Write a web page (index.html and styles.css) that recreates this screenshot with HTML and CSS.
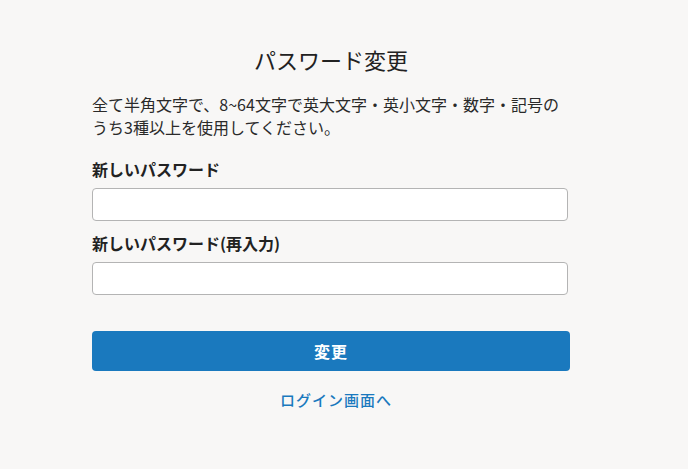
FILE: index.html
```html
<!DOCTYPE html>
<html lang="ja">
<head>
    <meta charset="UTF-8">
    <meta name="viewport" content="width=device-width, initial-scale=1.0">
    <title>パスワード変更</title>
    <link rel="stylesheet" href="styles.css">
</head>
<body>
    <div class="container">
        <h1 class="title">パスワード変更</h1>
        <p class="note">全て半角文字で、8~64文字で英大文字・英小文字・数字・記号のうち3種以上を使用してください。</p>
        <form class="form">
            <label class="label" for="pw1">新しいパスワード</label>
            <input class="input" id="pw1" type="password">
            <label class="label" for="pw2">新しいパスワード(再入力)</label>
            <input class="input" id="pw2" type="password">
            <button class="submit" type="button">変更</button>
        </form>
        <a class="back" href="#">ログイン画面へ</a>
    </div>
</body>
</html>
```

FILE: styles.css
```css
body {
    margin: 0;
    background-color: #f8f7f6;
    font-family: "Noto Sans CJK JP", "Noto Sans", sans-serif;
    color: #222;
}

.container {
    width: 478px;
    margin-left: 92px;
    padding-top: 42px;
    display: flex;
    flex-direction: column;
}

.title {
    margin: 0;
    font-size: 22px;
    font-weight: 400;
    line-height: 34px;
    text-align: center;
}

.note {
    margin: 17px 0 0 0;
    font-size: 16px;
    line-height: 23px;
    padding-right: 8px;
    color: #2a2a2a;
}

.form {
    display: flex;
    flex-direction: column;
    margin-top: 18px;
}

.label {
    font-size: 16px;
    font-weight: 700;
    line-height: 24px;
}

.input {
    box-sizing: border-box;
    width: 476px;
    height: 33px;
    margin-top: 7px;
    margin-bottom: 10px;
    border: 1px solid #b4b4b4;
    border-radius: 4px;
    background: #fff;
}

.submit {
    margin-top: 26px;
    height: 40px;
    border: none;
    border-radius: 4px;
    background-color: #1a79be;
    color: #fff;
    font-family: inherit;
    font-size: 16px;
    font-weight: 700;
    letter-spacing: 1px;
}

.back {
    margin-top: 17px;
    align-self: center;
    margin-left: 10px;
    color: #1a79be;
    font-size: 15px;
    font-weight: 500;
    line-height: 24px;
    text-decoration: none;
    letter-spacing: 1px;
}
```
